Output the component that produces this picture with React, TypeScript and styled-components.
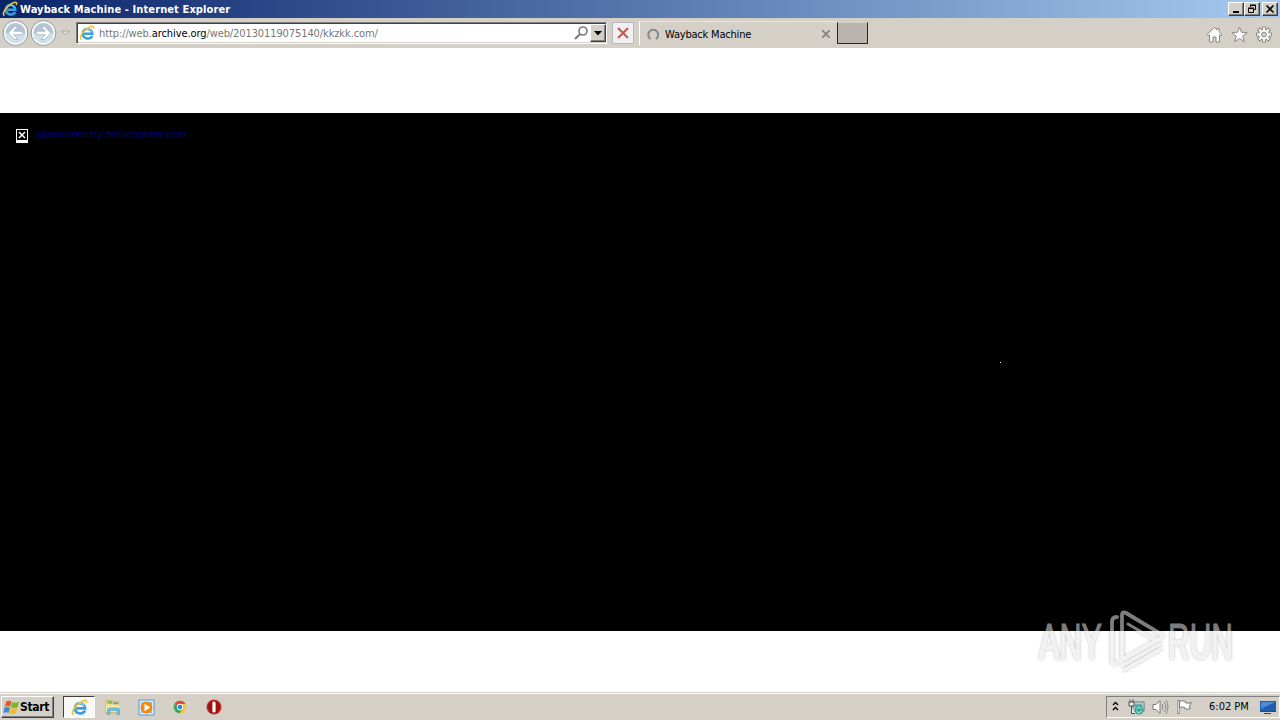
import React from 'react';
import styled, { createGlobalStyle } from 'styled-components';

const GlobalStyle = createGlobalStyle`
  * {
    box-sizing: border-box;
  }

  body {
    margin: 0;
    overflow: hidden;
    font-family: 'DejaVu Sans Condensed', 'DejaVu Sans', sans-serif;
    font-stretch: condensed;
    font-size: 11px;
    color: #000;
  }

  svg {
    display: block;
    flex: none;
  }
`;

const Desktop = styled.div`
  position: relative;
  display: flex;
  flex-direction: column;
  width: 1280px;
  height: 720px;
  background: #fff;
`;

const TitleBar = styled.header`
  display: flex;
  align-items: center;
  height: 18px;
  padding: 0 2px;
  background: linear-gradient(90deg, #0a246a, #a6caf0);
`;

const Label = styled.span`
  display: block;
  flex: none;
  line-height: 14px;
  white-space: nowrap;
`;

const WindowTitle = styled(Label)`
  flex: 1;
  margin-left: 2px;
  padding-top: 1px;
  color: #fff;
  font-weight: bold;
  letter-spacing: 0.11px;
`;

const WindowButton = styled.button`
  display: flex;
  align-items: center;
  justify-content: center;
  width: 16px;
  height: 14px;
  padding: 0;
  border: 1px solid;
  border-color: #fff #404040 #404040 #fff;
  background: #d4d0c8;
  box-shadow: inset -1px -1px #808080;

  &:last-child {
    margin-left: 2px;
  }
`;

const Toolbar = styled.nav`
  display: flex;
  align-items: center;
  height: 30px;
  padding-left: 2px;
  background: #d4d0c8;
`;

const AddressBar = styled.div`
  display: flex;
  align-items: center;
  width: 531px;
  height: 22px;
  margin-left: 4px;
  padding: 1px 0 1px 2px;
  border: 1px solid;
  border-color: #808080 #fff #fff #808080;
  background: #fff;
  box-shadow: inset 1px 1px #404040, inset -1px -1px #d4d0c8;
`;

const Address = styled(Label)`
  flex: 1;
  margin-left: 4px;
  padding-top: 2px;
  color: #777;
  letter-spacing: -0.1px;

  b {
    color: #000;
    font-weight: normal;
  }
`;

const DropButton = styled.button`
  display: flex;
  align-items: center;
  justify-content: center;
  width: 16px;
  height: 18px;
  margin-left: 1px;
  padding: 0;
  border: 1px solid;
  border-color: #fff #404040 #404040 #fff;
  background: #d4d0c8;
  box-shadow: inset -1px -1px #808080;
`;

const StopButton = styled.button`
  display: flex;
  align-items: center;
  justify-content: center;
  width: 22px;
  height: 22px;
  margin-left: 5px;
  padding: 0;
  border: 1px solid #b7b9bd;
  border-radius: 2px;
  background: #f0f0f3;
`;

const Tab = styled.div`
  display: flex;
  align-items: center;
  width: 198px;
  height: 24px;
  margin: 0 0 1px 5px;
  padding: 2px 7px 0 6px;
  border-top: 1px solid #e9e7e2;
  border-left: 1px solid #fff;
`;

const TabTitle = styled(Label)`
  flex: 1;
  margin-left: 6px;
  padding-top: 1px;
  letter-spacing: -0.2px;
`;

const NewTab = styled.div`
  width: 31px;
  height: 22px;
  margin-bottom: 1px;
  border: 1px solid #252525;
  border-top-color: #d4d0c8;
  background: #b9b4ae;
`;

const Tools = styled.div`
  display: flex;
  gap: 8px;
  margin: 3px 8px 0 auto;
`;

const Page = styled.main`
  height: 518px;
  margin-top: 65px;
  background: #000;
`;

const Sponsor = styled.div`
  display: flex;
  align-items: flex-start;
  padding: 15px 16px;
  color: #000078;
`;

const SponsorLink = styled(Label)`
  margin: -1px 0 0 8px;
  font-family: 'Liberation Sans', Arial, sans-serif;
  font-size: 11px;
`;

const Speck = styled.i`
  position: absolute;
  top: 362px;
  left: 1000px;
  width: 1px;
  height: 1px;
  background: #fff;
`;

const Watermark = styled.div`
  position: absolute;
  top: 604px;
  left: 1032px;
`;

const TaskBar = styled.footer`
  display: flex;
  align-items: center;
  height: 28px;
  margin-top: auto;
  padding: 1px 0 0 1px;
  border-top: 1px solid #d4d0c8;
  background: #d4d0c8;
  box-shadow: inset 0 1px #fff;
`;

const StartButton = styled.button`
  display: flex;
  align-items: center;
  width: 53px;
  height: 22px;
  padding: 0 0 0 1px;
  border: 1px solid;
  border-color: #fff #404040 #404040 #fff;
  background: #d4d0c8;
  box-shadow: inset -1px -1px #808080;
  font: bold 12px 'DejaVu Sans Condensed', 'DejaVu Sans', sans-serif;
  font-stretch: condensed;
  letter-spacing: -0.3px;
`;

const TaskButton = styled.div<{ $active?: boolean }>`
  display: flex;
  align-items: center;
  justify-content: center;
  width: ${({ $active }) => ($active ? 32 : 34)}px;
  height: 22px;
  margin-left: ${({ $active }) => ($active ? 9 : 0)}px;
  border: ${({ $active }) => ($active ? '1px solid' : '0')};
  border-color: #404040 #fff #fff #404040;
  background: ${({ $active }) => ($active ? '#f8f8f7' : 'transparent')};
`;

const Tray = styled.div`
  display: flex;
  align-items: center;
  width: 174px;
  height: 22px;
  margin-left: auto;
  padding: 0 3px 0 5px;
  border: 1px solid;
  border-color: #808080 #fff #fff #808080;
`;

const TrayIcons = styled.div`
  display: flex;
  align-items: center;
  gap: 7px;
  margin-left: 9px;
`;

const Clock = styled(Label)`
  margin: 0 11px 0 16px;
`;

const IeIcon: React.FC<{ size?: number }> = ({ size = 16 }) => (
  <svg width={size} height={size} viewBox="0 0 16 16" fill="none">
    <path d="M13.2 11c-2 4-9.4 3.3-9.4-2.4 0-6 9.2-6 9.5.2H5.2" stroke="#3a9fe0" strokeWidth="2.5" />
    <path d="M4.7 7.5c.7-4 6.5-4.3 7.9-.5" stroke="#8bd6f7" strokeWidth="1" />
    <path d="M2.6 14.5C-.8 13.8 3.6 6.2 9 3c4-2.6 6.7-2.3 5.3.8" stroke="#edc535" strokeWidth="1.6" />
  </svg>
);

const NavIcon: React.FC<{ forward?: boolean }> = ({ forward }) => (
  <svg width="28" height="28" viewBox="0 0 28 28">
    <circle cx="13.5" cy="14" r="12.4" fill="#e9f0f4" stroke="#91999f" />
    <circle cx="13.5" cy="14" r="10.8" fill="#b5c5d2" stroke="#f5fafc" strokeWidth="1.5" />
    <path d="M3.5 15c4-2 15-2 20-1-1 12-18 14-20 1Z" fill="#cfe1ec" />
    <path
      d="M12.5 7.5 6 14l6.5 6.5H16l-4.4-4.7h9v-3.6h-9L16 7.5Z"
      transform={forward ? 'matrix(-1 0 0 1 27 0)' : undefined}
      fill="#fff"
      stroke="#98aaba"
      strokeWidth=".7"
    />
  </svg>
);

const HomeIcon = () => (
  <svg width="17" height="17" viewBox="0 0 17 17">
    <path d="m1 8.5 7.5-7L11 3.8V2.5h2v3.2l3 2.8-1 1.3-1.5-1V16H10v-5H7v5H3.5V8.8L2.1 9.8Z" fill="#fff" stroke="#8b8782" />
  </svg>
);

const StarIcon = () => (
  <svg width="17" height="17" viewBox="0 0 17 17">
    <path d="m8.5 1 2 5.3 5.7.2-4.5 3.6 1.6 5.5-4.8-3.1-4.8 3.1 1.6-5.5L.8 6.5l5.7-.2Z" fill="#fff" stroke="#8b8782" />
  </svg>
);

const gearTeeth = [0, 45, 90, 135, 180, 225, 270, 315];

const GearIcon = () => (
  <svg width="16" height="17" viewBox="0 0 16 17">
    <g fill="#fff" stroke="#8b8782">
      {gearTeeth.map(angle => (
        <path key={angle} d="M6.5 4V.9h3V4" transform={`rotate(${angle} 8 8.5)`} />
      ))}
      <circle cx="8" cy="8.5" r="5.2" />
    </g>
    <path d="M8 2v13M1.5 8.5h13M3.4 3.9l9.2 9.2m0-9.2-9.2 9.2" stroke="#fff" strokeWidth="2" />
    <circle cx="8" cy="8.5" r="2.4" fill="#d4d0c8" stroke="#8b8782" />
  </svg>
);

const WindowsIcon = () => (
  <svg width="17" height="17" viewBox="0 0 17 17">
    <path d="M3.2 2.5c2-1.1 3.8-1 5.2 0L7.2 7.8c-1.6-1-3.4-.9-5.4 0Z" fill="#e75826" />
    <path d="M9 3c2 1 4.2 1 7-.2l-1.5 5.4c-2.4 1-4.8.9-6.7 0Z" fill="#76b82c" />
    <path d="M1.5 8.6c1.9-1 3.7-.9 5.5.1l-1.4 5.3c-1.6-1-3.4-1-5.3-.1Z" fill="#388cd2" />
    <path d="M7.6 9.1c2 1 4.2 1 6.6 0l-1.4 5.2c-2.4 1.1-4.6 1-6.6-.1Z" fill="#f4bd25" />
  </svg>
);

const FolderIcon = () => (
  <svg width="17" height="17" viewBox="0 0 17 17">
    <path d="M2 1.5h5l1 1.3h7V14H2Z" fill="#e9cf78" stroke="#c3a24d" strokeWidth=".6" />
    <path d="M4 2.5h4v2H4Z" fill="#5eb85d" />
    <path d="M9 3.5h5v2H9Z" fill="#4f9fdb" />
    <path d="M2 5.5h13.5V13H2Z" fill="#f8e7a1" />
    <path d="M3.5 15.5V11q0-2 2-2h8q2 0 2 2v4.5H13v-4H6v4Z" fill="#70c4e7" stroke="#4299c4" strokeWidth=".6" />
  </svg>
);

const MediaIcon = () => (
  <svg width="17" height="17" viewBox="0 0 17 17">
    <path d="M1 1h15v15H1Z" fill="#e3eff8" stroke="#4f9bd0" />
    <path d="M3 3h11v11H3Z" fill="#8abfe4" />
    <circle cx="8.5" cy="8.5" r="5.9" fill="#f28a13" />
    <path d="M6.5 4.8v7.4l5.8-3.7Z" fill="#fff" />
  </svg>
);

const ChromeIcon = () => (
  <svg width="14" height="14" viewBox="0 0 16 16">
    <circle cx="8" cy="8" r="7.2" fill="#f5c934" />
    <path d="M8 8 1.8 4.4A7.2 7.2 0 0 1 14.3 4.5H8Z" fill="#dd493a" />
    <path d="m8 8-6.2-3.6A7.2 7.2 0 0 0 7.5 15.2L11 10Z" fill="#36a660" />
    <circle cx="8" cy="8" r="3.6" fill="#f7f7f7" />
    <circle cx="8" cy="8" r="2.7" fill="#3d80dc" />
  </svg>
);

const OperaIcon = () => (
  <svg width="16" height="16" viewBox="0 0 16 16">
    <circle cx="8" cy="8" r="7.5" fill="#c4302a" />
    <circle cx="8" cy="8" r="6.3" fill="#a01212" />
    <rect x="6.4" y="2.5" width="3.2" height="11" rx="1.6" fill="#fff" />
  </svg>
);

const NetworkIcon = () => (
  <svg width="17" height="17" viewBox="0 0 17 17">
    <path d="M5 3h11v9H5Z" fill="#e6eeee" stroke="#616e70" />
    <path d="M6.5 4.5h8v6h-8Z" fill="#72a9b0" />
    <path d="M1 3h5v4H1ZM3.5 7v7.5H7M2 .5V3m3-2.5V3" fill="#eee" stroke="#4c4c4c" />
    <circle cx="11" cy="11" r="4.5" fill="#32a895" />
    <path d="M8.5 10.5c1-2.5 4-2.5 5-.5m0 1.5c-1 2.5-4 2.5-5 .5" fill="none" stroke="#e6f5ee" />
  </svg>
);

const SpeakerIcon = () => (
  <svg width="17" height="16" viewBox="0 0 17 16" fill="none">
    <path d="M1 5.5h3l4-4v13l-4-4H1Z" fill="#fff" stroke="#777" />
    <path d="M10 5q2 3 0 6m2-8q4 5 0 10m2-12q4 7 0 14" stroke="#888" />
  </svg>
);

const FlagIcon = () => (
  <svg width="17" height="16" viewBox="0 0 17 16">
    <path d="M2.5 1v14" stroke="#777" strokeWidth="2" />
    <path d="M2.5 2v12" stroke="#eee" strokeWidth=".8" />
    <path d="M3.5 2.5q3-1.5 6 0v1.3q3 1 6-.3l-2 3.3.5 3q-3 1-5.5-.5V8.5q-2-1-5 0Z" fill="#fff" stroke="#777" />
  </svg>
);

const MonitorIcon = () => (
  <svg width="16" height="16" viewBox="0 0 16 16">
    <path d="M0 2h16v10H0Z" fill="#215cad" />
    <path d="M1 3h14L1 10Z" fill="#4b8cd7" />
    <path d="M0 12h16v1H0Zm4 2h7v1H4Z" fill="#36465c" />
  </svg>
);

const AnyRunMark = () => (
  <svg width="204" height="74" viewBox="0 0 204 74">
    <defs>
      <filter id="markShadow" x="-10%" y="-10%" width="120%" height="120%">
        <feDropShadow dx="0" dy="0" stdDeviation="1.4" floodColor="#000" floodOpacity=".3" />
      </filter>
      <clipPath id="darkArea"><path d="M0 0h204v27H0Z" /></clipPath>
      <clipPath id="lightArea"><path d="M0 27h204v47H0Z" /></clipPath>
      <g id="markShape">
        <g fontFamily="Liberation Sans Narrow, Liberation Sans, sans-serif" fontSize="50" strokeWidth="1.2">
          <text x="7" y="55" textLength="63" lengthAdjust="spacingAndGlyphs">ANY</text>
          <text x="136" y="55" textLength="65" lengthAdjust="spacingAndGlyphs">RUN</text>
        </g>
        <g fill="none" strokeWidth="3.8" strokeLinejoin="round" strokeLinecap="round">
          <path d="M85 13q-5 0-5 5v38q0 5 5 3M90 53V11q0-4 4-2l35 21q3 2 0 4L92 55" />
          <path d="m96 20 27 16M91 61l37-21M92 66l37-21" strokeWidth="3" />
        </g>
      </g>
    </defs>
    <g clipPath="url(#darkArea)">
      <use href="#markShape" fill="#7d7d7d" stroke="#7d7d7d" />
    </g>
    <g clipPath="url(#lightArea)">
      <use href="#markShape" fill="#f2f2f2" stroke="#f2f2f2" filter="url(#markShadow)" />
    </g>
  </svg>
);

const BrokenImage = () => (
  <svg width="12" height="15" viewBox="0 0 12 15">
    <path d="M0 1h12v14H0Z" fill="#fff" />
    <path d="M1 2h10v10H1Z" fill="#000" />
    <path d="m3 4 6 6m0-6-6 6" stroke="#fff" strokeWidth="1.5" />
  </svg>
);

const App: React.FC = () => (
  <Desktop>
    <GlobalStyle />
    <TitleBar>
      <IeIcon />
      <WindowTitle>Wayback Machine - Internet Explorer</WindowTitle>
      <WindowButton aria-label="Minimize">
        <svg width="10" height="10"><path d="M2 7h6v2H2Z" /></svg>
      </WindowButton>
      <WindowButton aria-label="Restore">
        <svg width="10" height="10"><path d="M3.5 3V1.5h5v4H7M1.5 4.5h5v4h-5ZM3 1h6M1 4h6" fill="none" stroke="#000" /></svg>
      </WindowButton>
      <WindowButton aria-label="Close">
        <svg width="10" height="10"><path d="m1.5 1.5 7 7m0-7-7 7" stroke="#000" strokeWidth="1.6" /></svg>
      </WindowButton>
    </TitleBar>
    <Toolbar>
      <NavIcon />
      <NavIcon forward />
      <svg width="14" height="10"><path d="M3.5 3h8l-4 4Z" fill="#e4e1dc" stroke="#aaa6a1" /></svg>
      <AddressBar>
        <IeIcon />
        <Address>http://web.<b>archive.org</b>/web/20130119075140/kkzkk.com/</Address>
        <svg width="15" height="16" fill="none" stroke="#777" strokeWidth="1.6">
          <circle cx="9" cy="6" r="4" />
          <path d="m6 9-5 5" strokeWidth="2" />
        </svg>
        <DropButton aria-label="Show address list">
          <svg width="8" height="5"><path d="M0 0h8L4 4.5Z" /></svg>
        </DropButton>
      </AddressBar>
      <StopButton aria-label="Stop">
        <svg width="12" height="12"><path d="m1 1 10 10m0-10L1 11" stroke="#c75450" strokeWidth="2" /></svg>
      </StopButton>
      <Tab>
        <svg width="13" height="13"><path d="M4.5 11A5 5 0 1 1 10 11" fill="none" stroke="#888" strokeWidth="2" /></svg>
        <TabTitle>Wayback Machine</TabTitle>
        <svg width="8" height="8"><path d="m0 0 8 8m0-8-8 8" stroke="#86827d" strokeWidth="1.8" /></svg>
      </Tab>
      <NewTab />
      <Tools>
        <HomeIcon />
        <StarIcon />
        <GearIcon />
      </Tools>
    </Toolbar>
    <Page>
      <Sponsor>
        <BrokenImage />
        <SponsorLink>sponsored by zerocounter.com</SponsorLink>
      </Sponsor>
    </Page>
    <Speck />
    <Watermark><AnyRunMark /></Watermark>
    <TaskBar>
      <StartButton><WindowsIcon />Start</StartButton>
      <TaskButton $active><IeIcon size={17} /></TaskButton>
      <TaskButton><FolderIcon /></TaskButton>
      <TaskButton><MediaIcon /></TaskButton>
      <TaskButton><ChromeIcon /></TaskButton>
      <TaskButton><OperaIcon /></TaskButton>
      <Tray>
        <svg width="7" height="12" fill="none" stroke="#000" strokeWidth="1.4"><path d="m1 4 2.5-2.5L6 4M1 9l2.5-2.5L6 9" /></svg>
        <TrayIcons>
          <NetworkIcon />
          <SpeakerIcon />
          <FlagIcon />
        </TrayIcons>
        <Clock>6:02 PM</Clock>
        <MonitorIcon />
      </Tray>
    </TaskBar>
  </Desktop>
);

export default App;
